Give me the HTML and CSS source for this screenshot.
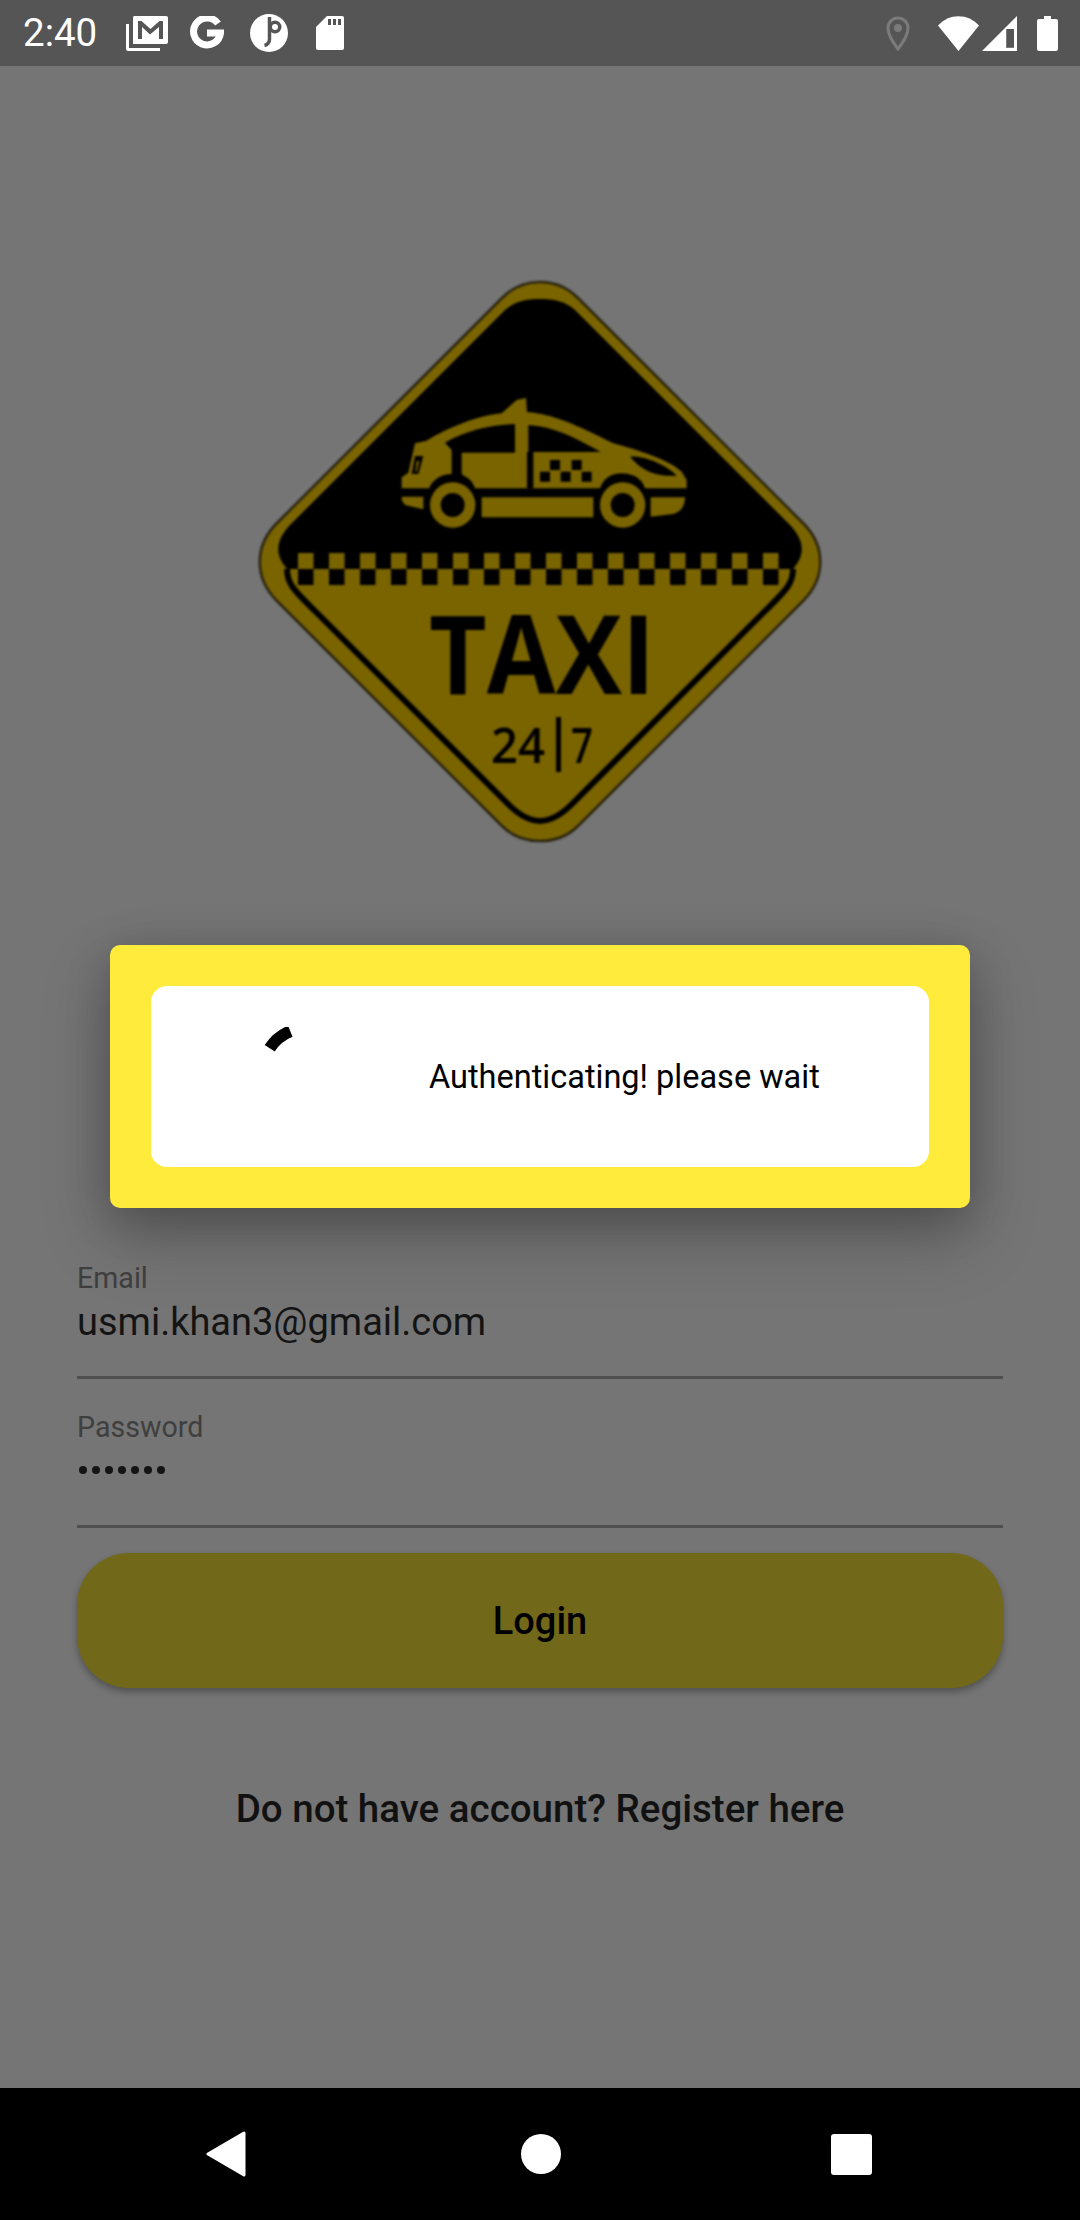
FILE: index.html
```html
<!DOCTYPE html>
<html lang="en">
<head>
  <meta charset="UTF-8">
  <title>Taxi 24/7 login</title>
  <link rel="stylesheet" href="styles.css">
</head>
<body>
  <div class="screen">
    <!-- status bar -->
    <header class="status_bar">
      <div class="status_left">
        <span class="clock">2:40</span>
        <svg class="icon_mail" viewBox="0 0 42 35" width="42" height="35">
          <path fill="#fff" d="M8 0h32a2 2 0 0 1 2 2v24a2 2 0 0 1-2 2H7V2a2 2 0 0 1 1-2z"/>
          <path fill="#555" d="M12 5h3.500l9 8 9-8H37v18h-4V11l-9 7.500L16 11v12h-4z"/>
          <path fill="#fff" d="M0 8h3v24h31v3H2a2 2 0 0 1-2-2z"/>
        </svg>
        <svg class="icon_g" viewBox="0 0 34 34" width="34" height="34">
          <path fill="none" stroke="#fff" stroke-width="7" d="M28 7.500A13.500 13.500 0 1 0 30.500 17H17"/>
        </svg>
        <svg class="icon_p" viewBox="0 0 38 38" width="38" height="38">
          <circle cx="19" cy="19" r="19" fill="#fff"/>
          <path fill="none" stroke="#555" stroke-width="3.500" d="M19.500 3V25a6.500 6.500 0 0 1-5 6.500"/>
          <circle cx="25" cy="13" r="6.500" fill="#555"/>
          <circle cx="25" cy="13" r="3" fill="#fff"/>
        </svg>
        <svg class="icon_sd" viewBox="0 0 28 34" width="28" height="34">
          <path fill="#fff" d="M11 0h15a2 2 0 0 1 2 2v30a2 2 0 0 1-2 2H2a2 2 0 0 1-2-2V11z"/>
          <path fill="#555" d="M12 3h3v6h-3zM17 3h3v6h-3zM22 3h3v6h-3z"/>
        </svg>
      </div>
      <div class="status_right">
        <svg class="icon_pin" viewBox="0 0 24 35" width="24" height="35">
          <path fill="none" stroke="#7b7b7b" stroke-width="3" d="M12 33C6 25 2 19 2 12a10 10 0 0 1 20 0c0 7-4 13-10 21z"/>
          <circle cx="12" cy="12" r="4" fill="#7b7b7b"/>
        </svg>
        <svg class="icon_wifi" viewBox="0 0 41 35" width="41" height="35">
          <path fill="#fff" d="M0 9.500C11-3 30-3 41 9.500L20.500 35z"/>
        </svg>
        <svg class="icon_signal" viewBox="0 0 35 35" width="35" height="35">
          <path fill="#fff" d="M35 0v35H0z"/>
          <path fill="#555" d="M24 13h8v19h-8z"/>
          <path fill="#7b7b7b" d="M24 13h1v19h-1zM24 31h8v1h-8z"/>
        </svg>
        <svg class="icon_battery" viewBox="0 0 21 35" width="21" height="35">
          <path fill="#fff" d="M7 0h7v3h5a2 2 0 0 1 2 2v28a2 2 0 0 1-2 2H2a2 2 0 0 1-2-2V5a2 2 0 0 1 2-2h5z"/>
        </svg>
      </div>
    </header>

    <main class="content">
      <div class="logo_wrap">
        <!-- viewBox is in page coordinates, easier to read off the sign -->
        <svg class="logo" viewBox="258 280 564 564" width="564" height="564">
          <defs>
            <pattern id="check_yellow" patternUnits="userSpaceOnUse" x="298" y="553" width="31" height="16">
              <rect width="15.500" height="16" fill="#7a6400"/>
            </pattern>
            <pattern id="check_black" patternUnits="userSpaceOnUse" x="298" y="569" width="31" height="16">
              <rect width="15.500" height="16" fill="#000"/>
            </pattern>
          </defs>
          <path fill="#7a6400" stroke="#29230f" stroke-width="2.500" d="M540 282C556 282 568 288 578 298L803 523C826 546 826 578 803 601L578 826C568 836 556 841 540 841C524 841 512 836 502 826L277 601C254 578 254 546 277 523L502 298C512 288 524 282 540 282Z"/>
          <path fill="#000" d="M540 299C553 299 565 301 575 310L788 523C802 537 808 552 793 569H287C272 552 278 537 292 523L505 310C515 301 527 299 540 299Z"/>
          <rect x="298" y="553" width="481" height="16" fill="url(#check_yellow)"/>
          <rect x="298" y="569" width="481" height="16" fill="url(#check_black)"/>
          <path fill="none" stroke="#000" stroke-width="6" d="M287 569C287 585 296 592 316 612L508 804C520 816 530 821 540 821C550 821 560 816 572 804L764 612C784 592 793 585 793 569"/>

          <!-- car, drawn in 3x units -->
          <g transform="translate(380 390) scale(0.33333)">
            <path fill="#7a6400" d="M65 295V262L85 248L105 160L140 152C180 128 270 80 365 70L410 30L438 24L441 66C520 72 590 105 700 160C770 180 860 205 905 245L920 270V295H795C785 260 750 250 725 250C695 250 670 265 660 295H285C275 262 245 250 215 252C185 252 155 270 148 295Z"/>
            <path fill="#000" d="M195 158C255 122 335 105 405 102V188H245V250L268 285L215 255V180Z"/>
            <path fill="#000" d="M445 105C520 108 590 145 662 186H445V105ZM441 186H460V295H441Z"/>
            <path fill="#000" d="M750 200C790 195 860 225 890 257C840 260 790 250 750 200Z"/>
            <path fill="#000" d="M95 252L105 198H130L115 252Z"/>
            <path fill="#7a6400" d="M110 213h8l-8 32h-4z"/>
            <path fill="#000" d="M510 210h30v30h-30zM575 210h30v30h-30zM480 245h30v30h-30zM542 245h30v30h-30zM605 245h30v30h-30z"/>
            <path fill="#7a6400" d="M65 320H130V358L75 345L65 330ZM305 322H640V382H305ZM812 322H915C915 345 905 365 880 372L812 380Z"/>
            <circle cx="218" cy="345" r="82" fill="#000"/>
            <circle cx="728" cy="345" r="82" fill="#000"/>
            <circle cx="218" cy="345" r="52" fill="none" stroke="#7a6400" stroke-width="32"/>
            <circle cx="728" cy="345" r="52" fill="none" stroke="#7a6400" stroke-width="32"/>
          </g>

          <text class="logo_taxi" x="429" y="694" textLength="226" lengthAdjust="spacingAndGlyphs">TAXI</text>
          <text class="logo_hours" x="491" y="763" textLength="54" lengthAdjust="spacingAndGlyphs">24</text>
          <rect x="556" y="717" width="5" height="55" fill="#000"/>
          <text class="logo_hours" x="571" y="763" textLength="22" lengthAdjust="spacingAndGlyphs">7</text>
        </svg>
      </div>

      <form class="login_form">
        <div class="field">
          <label class="field_label">Email</label>
          <div class="field_value">usmi.khan3@gmail.com</div>
        </div>
        <div class="field">
          <label class="field_label">Password</label>
          <div class="field_dots">
            <i></i><i></i><i></i><i></i><i></i><i></i><i></i>
          </div>
        </div>
        <button type="button" class="btn_login">Login</button>
        <p class="register">Do not have account? Register here</p>
      </form>
    </main>

    <nav class="nav_bar">
      <svg viewBox="0 0 40 46" width="40" height="46">
        <path fill="#fff" stroke="#fff" stroke-width="3" stroke-linejoin="round" d="M38 2v42L2 23z"/>
      </svg>
      <span class="nav_home"></span>
      <span class="nav_recent"></span>
    </nav>

    <!-- progress dialog -->
    <div class="dialog">
      <div class="dialog_inner">
        <svg class="spinner" viewBox="0 0 99 99" width="99" height="99">
          <path fill="none" stroke="#000" stroke-width="12" d="M12.700 21.300A44 44 0 0 1 33.300 4.300"/>
        </svg>
        <span class="dialog_text">Authenticating! please wait</span>
      </div>
    </div>
  </div>
</body>
</html>
```

FILE: styles.css
```css
* {margin: 0; padding: 0; box-sizing: border-box;}

body {width: 1080px; height: 2220px; overflow: hidden; font-family: Roboto, "Noto Sans", sans-serif; background-color: #757575;}

.screen {position: relative; display: flex; flex-direction: column; width: 1080px; height: 2220px; background-color: #757575;}

/* status bar */
.status_bar {display: flex; justify-content: space-between; align-items: center; height: 66px; padding: 0 22px 0 23px; background-color: #555;}
.status_left {display: flex; align-items: center;}
.status_right {display: flex; align-items: center;}
.clock {width: 103px; font-size: 38.5px; line-height: 66px; color: #fff;}
.status_bar svg {display: block;}
.icon_mail {margin-right: 22px;}
.icon_g {margin-right: 26px;}
.icon_p {margin-right: 28px;}
.icon_pin {margin-right: 28px;}
.icon_wifi {margin-right: 3px;}
.icon_signal {margin-right: 20px;}

/* page */
.content {flex: 1; display: flex; flex-direction: column; align-items: center;}
.logo_wrap {padding-top: 214px;}
.logo {display: block; filter: blur(0.8px);}
.logo_taxi {font-family: "Open Sans", sans-serif; font-size: 110px; font-weight: 700; fill: #000;}
.logo_hours {font-family: "Open Sans", sans-serif; font-size: 48px; font-weight: 600; fill: #000;}

.login_form {width: 926px; margin-top: 418px;}
.field {height: 117px; border-bottom: 3px solid #4f4f4f; margin-bottom: 32px;}
.field_label {display: block; font-size: 28.6px; line-height: 32px; color: #3f3f3f;}
.field_value {margin-top: 5px; font-size: 38px; line-height: 46px; color: #141414;}
.field_dots {display: flex; gap: 5px; padding: 23px 0 0 2px;}
.field_dots i {display: block; width: 8px; height: 8px; border-radius: 50%; background-color: #141414;}

.btn_login {display: block; width: 100%; height: 135px; border: 0; border-radius: 52px; margin-top: -7px; background-color: #72681a; box-shadow: 0 4px 7px rgba(0, 0, 0, 0.3); font-family: Roboto, sans-serif; font-size: 38px; font-weight: 500; color: #000;}
.register {margin-top: 99px; font-size: 38.5px; font-weight: 500; line-height: 44px; text-align: center; color: #111;}

/* nav bar */
.nav_bar {display: flex; justify-content: space-between; align-items: center; height: 132px; padding: 0 208px 0 206px; background-color: #000;}
.nav_home {width: 40px; height: 40px; margin-left: 5px; border-radius: 50%; background-color: #fff;}
.nav_recent {width: 41px; height: 41px; border-radius: 3px; background-color: #fff;}

/* dialog sits over the page */
.dialog {position: absolute; left: 110px; top: 945px; width: 860px; height: 263px; padding: 41px; border-radius: 10px; background-color: #ffeb3b; box-shadow: 0 30px 70px rgba(0, 0, 0, 0.22), 0 10px 45px rgba(0, 0, 0, 0.2);}
.dialog_inner {display: flex; align-items: center; height: 100%; padding-left: 106px; border-radius: 16px; background-color: #fff;}
.spinner {display: block; flex: none; margin-right: 73px;}
.dialog_text {font-size: 32.5px; color: #000; white-space: nowrap;}
```
